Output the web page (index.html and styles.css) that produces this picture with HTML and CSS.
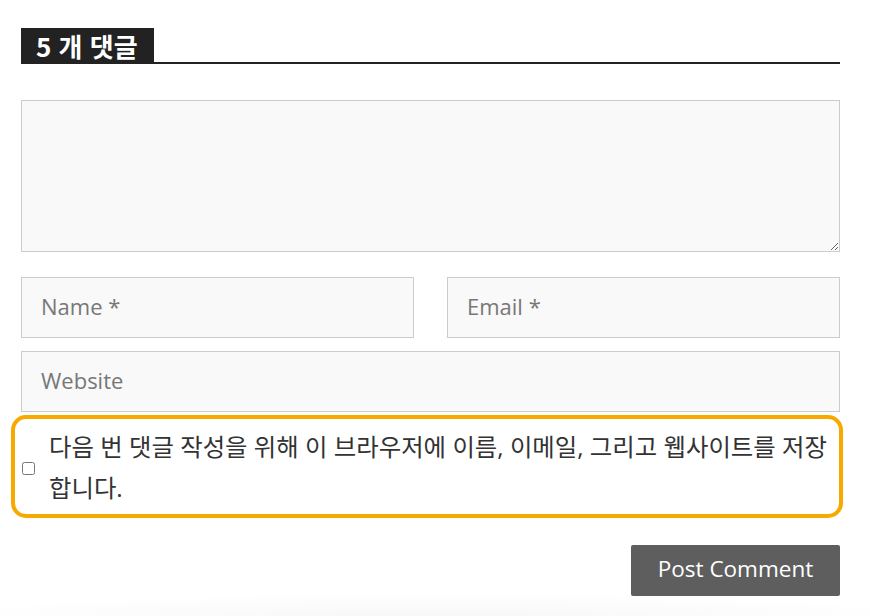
FILE: index.html
```html
<!DOCTYPE html>
<html lang="ko">
<head>
<meta charset="utf-8">
<title>댓글</title>
<link rel="stylesheet" href="styles.css">
</head>
<body>
<div class="wrap">
  <div class="heading"><span class="heading-label">5 개 댓글</span></div>
  <form class="form">
    <textarea class="comment"></textarea>
    <div class="row">
      <input class="field" type="text" placeholder="Name *">
      <input class="field" type="text" placeholder="Email *">
    </div>
    <input class="field full" type="text" placeholder="Website">
    <div class="consent">
      <input class="check" type="checkbox">
      <label class="consent-text">다음 번 댓글 작성을 위해 이 브라우저에 이름, 이메일, 그리고 웹사이트를 저장합니다.</label>
    </div>
    <div class="actions">
      <button class="submit" type="button">Post Comment</button>
    </div>
  </form>
</div>
<div class="fade"></div>
</body>
</html>
```
FILE: styles.css
```css
html, body {
  margin: 0;
  padding: 0;
  background: #ffffff;
}
body {
  font-family: "Open Sans", "Noto Sans CJK KR", sans-serif;
  color: #333333;
  width: 870px;
  height: 616px;
  overflow: hidden;
  position: relative;
}
.wrap {
  padding: 28px 30px 0 21px;
}
.heading {
  border-bottom: 2px solid #222222;
  height: 34px;
}
.heading-label {
  display: inline-block;
  background: #222222;
  color: #ffffff;
  font-family: "Noto Sans CJK KR", "Open Sans", sans-serif;
  font-weight: 700;
  font-size: 26px;
  line-height: 36px;
  height: 36px;
  padding: 0 16px 0 15px;
}
.form {
  margin-top: 36px;
  display: flex;
  flex-direction: column;
}
.comment {
  box-sizing: border-box;
  width: 819px;
  height: 152px;
  margin: 0;
  border: 1px solid #cccccc;
  background: #f9f9f9;
  display: block;
  resize: vertical;
}
.row {
  display: flex;
  gap: 33px;
  margin-top: 25px;
}
.field {
  box-sizing: border-box;
  width: 393px;
  height: 61px;
  margin: 0;
  border: 1px solid #cccccc;
  background: #f9f9f9;
  padding: 0 19px 3px;
  font-family: "Open Sans", "Noto Sans CJK KR", sans-serif;
  font-size: 22px;
  color: #333333;
  outline: none;
}
.field::placeholder {
  color: #777777;
}
.full {
  width: 819px;
  margin-top: 13px;
}
.consent {
  margin: 3px -3px 0 -10px;
  height: 103px;
  box-sizing: border-box;
  border: 4px solid #f7a900;
  border-radius: 15px;
  display: flex;
  align-items: center;
  padding: 0 8px 0 7px;
}
.check {
  width: 13px;
  height: 13px;
  margin: 3px 14px 0 0;
  flex: none;
}
.consent-text {
  font-size: 24.4px;
  line-height: 41px;
  color: #333333;
  font-family: "Open Sans", "Noto Sans CJK KR", sans-serif;
}
.actions {
  display: flex;
  justify-content: flex-end;
  margin-top: 27px;
}
.submit {
  width: 209px;
  height: 51px;
  border: none;
  border-radius: 2px;
  background: #5e5e5e;
  color: #ffffff;
  font-family: "Open Sans", sans-serif;
  font-size: 22.5px;
  padding: 0 0 4px;
  cursor: pointer;
}
.fade {
  position: absolute;
  left: 0;
  right: 0;
  bottom: 0;
  height: 20px;
  background: radial-gradient(ellipse at 50% 100%, #f7f7f7 0%, #fcfcfc 50%, #ffffff 80%);
}
```
